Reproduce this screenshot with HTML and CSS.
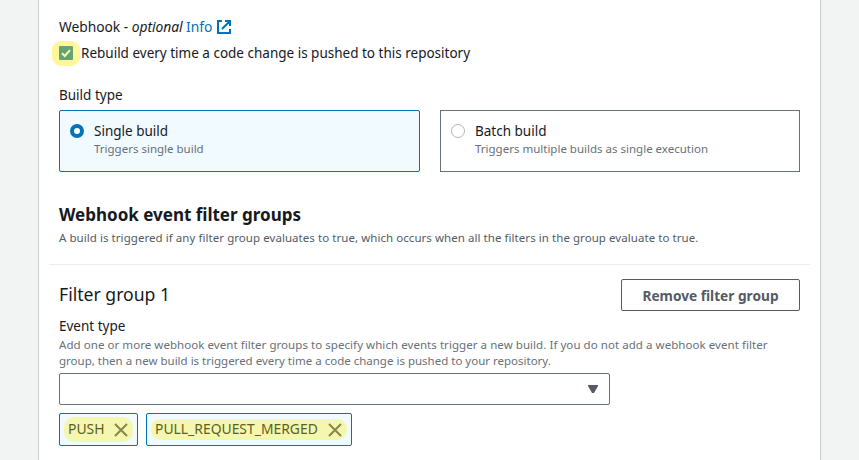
FILE: index.html
```
<!DOCTYPE html>
<html lang="en">
<head>
<meta charset="utf-8">
<title>Webhook settings</title>
<link rel="stylesheet" href="styles.css">
</head>
<body>
<main class="panel">
  <div class="webhook">
    <span class="webhook-label">Webhook - <em>optional</em> <a class="info">Info</a></span>
    <svg class="external" width="14" height="14" viewBox="0 0 14 14" fill="none" stroke="#0073bb" stroke-width="2"><path d="M5 1H1v12h12V9M8 1h5v5M13 1L5 9"/></svg>
  </div>
  <label class="rebuild">
    <span class="check"><svg width="14" height="14" viewBox="0 0 14 14"><rect width="14" height="14" rx="1" fill="#63a375"/><path d="M3 7.2l2.8 2.8L11 4.2" fill="none" stroke="#fff9a8" stroke-width="2"/></svg></span>
    <span class="rebuild-text">Rebuild every time a code change is pushed to this repository</span>
  </label>
  <div class="build-label">Build type</div>
  <div class="tiles">
    <div class="tile selected">
      <span class="radio"></span>
      <div><div class="tile-title">Single build</div><div class="tile-desc">Triggers single build</div></div>
    </div>
    <div class="tile">
      <span class="radio"></span>
      <div><div class="tile-title">Batch build</div><div class="tile-desc">Triggers multiple builds as single execution</div></div>
    </div>
  </div>
  <h2>Webhook event filter groups</h2>
  <p class="intro">A build is triggered if any filter group evaluates to true, which occurs when all the filters in the group evaluate to true.</p>
  <hr>
  <div class="group-head">
    <h3>Filter group 1</h3>
    <button>Remove filter group</button>
  </div>
  <div class="event-label">Event type</div>
  <p class="event-desc"><span class="first-line">Add one or more webhook event filter groups to specify which events trigger a new build. If you do not add a webhook event filter</span><br>group, then a new build is triggered every time a code change is pushed to your repository.</p>
  <div class="select"><svg width="10" height="8" viewBox="0 0 10 8"><path d="M0 0h10v1L6 8H4L0 1z" fill="#545b64"/></svg></div>
  <div class="tokens">
    <div class="token push"><span class="mark"><span class="name">PUSH</span><svg width="14" height="14" viewBox="0 0 14 14"><path d="M1 1l12 12M13 1L1 13" stroke="#87874b" stroke-width="2"/></svg></span></div>
    <div class="token merged"><span class="mark"><span class="name">PULL_REQUEST_MERGED</span><svg width="14" height="14" viewBox="0 0 14 14"><path d="M1 1l12 12M13 1L1 13" stroke="#87874b" stroke-width="2"/></svg></span></div>
  </div>
</main>
</body>
</html>
```

FILE: styles.css
```
* { box-sizing: border-box; }
body { margin: 0; background: #f2f3f3; color: #16191f; font: 13.5px/22px "Noto Sans", sans-serif; overflow: hidden; }
.panel { width: 783px; height: 460px; margin-left: 38px; padding: 16px 20px 0; background: #fff; border: solid #c9cfcf; border-width: 0 1px; white-space: nowrap; }
.webhook { display: flex; align-items: center; height: 22px; gap: 5px; }
.webhook-label { width: 153px; font-size: 13.8px; letter-spacing: -0.03px; }
.info { color: #0073bb; }
.rebuild { display: flex; align-items: center; height: 25px; margin: 3px 0 0 -7px; gap: 1px; }
.check { display: flex; align-items: center; width: 28px; height: 25px; padding: 0 0 1px 7px; border-radius: 9px; background: #fff799; }
.rebuild-text { padding-bottom: 2px; }
.build-label { height: 22px; margin: 18px 0 4px; }
.tiles { display: grid; grid-template-columns: 361px 360px; gap: 20px; }
.tile { display: flex; height: 62px; padding: 10px; gap: 10px; border: 1px solid #687078; }
.tile.selected { background: #f1faff; border-color: #0073bb; border-radius: 2px; }
.radio { width: 14px; height: 14px; margin-top: 3px; border: 1px solid #aab7b8; border-radius: 50%; background: #fff; }
.selected .radio { border: 4px solid #0073bb; }
.tile-title { height: 20px; line-height: 20px; }
.tile-desc { height: 16px; font-size: 11.5px; line-height: 16px; color: #687078; }
h2 { margin: 31px 0 3px; font-size: 17px; line-height: 24px; font-weight: 700; }
.intro { height: 16px; margin: 0; font-size: 11.5px; letter-spacing: 0.057px; line-height: 16px; color: #545b64; }
hr { height: 1px; margin: 18px -10px 14px; border: 0; background: #eaeded; }
.group-head { display: flex; align-items: center; justify-content: space-between; height: 32px; }
h3 { margin: 0; padding-bottom: 2px; font-size: 17.6px; font-weight: 400; }
button { width: 179px; height: 32px; padding: 0; border: 1px solid #545b64; border-radius: 2px; background: #fff; color: #545b64; font: 700 13.7px "Noto Sans", sans-serif; }
.event-label { height: 20px; margin-top: 5px; line-height: 20px; }
.event-desc { height: 32px; margin: 1px 0 4px; font-size: 11.5px; line-height: 16px; color: #687078; }
.first-line { letter-spacing: 0.057px; }
.select { display: flex; align-items: center; justify-content: flex-end; width: 551px; height: 32px; padding-right: 11px; border: 1px solid #687078; border-radius: 2px; }
.tokens { display: flex; gap: 8px; margin-top: 8px; }
.token { display: flex; align-items: center; height: 33px; padding-left: 4px; border: 1px solid #0073bb; border-radius: 2px; background: #f1faff; }
.push { width: 79px; }
.merged { width: 206px; }
.mark { display: flex; align-items: center; justify-content: space-between; padding: 0 5px 0 4px; border-radius: 10px; background: #f5f7ae; color: #5c5f27; }
.name { padding-bottom: 1px; font-size: 13.9px; }
.push .mark { width: 69px; height: 25px; }
.merged .mark { width: 196px; height: 21px; }
```
